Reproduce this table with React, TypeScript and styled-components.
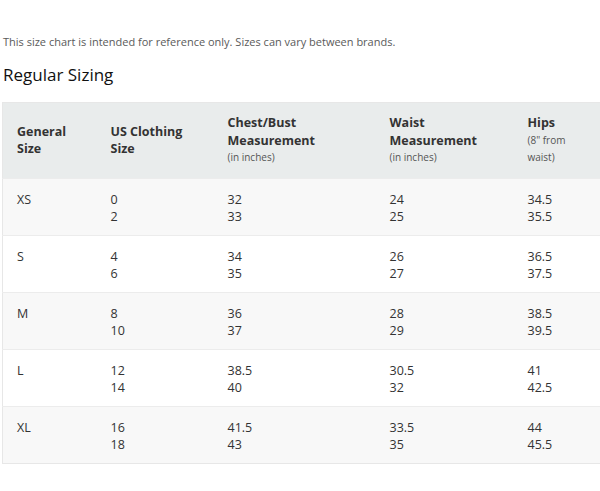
import React from "react";
import styled, { createGlobalStyle } from "styled-components";

const Global = createGlobalStyle`
  html, body { margin: 0; padding: 0; background: #fff; overflow: hidden; }
  body { font-family: "Open Sans", "Noto Sans", Arial, sans-serif; color: #333; }
`;

const Page = styled.div`
  width: 600px;
  height: 491px;
  padding: 34px 0 0 2px;
  box-sizing: border-box;
  overflow: hidden;
`;

const Note = styled.p`
  margin: 0 0 0 1px;
  font-size: 11px;
  line-height: 16px;
  color: #5a5a5a;
`;

const Title = styled.h2`
  margin: 13px 0 0 1px;
  font-size: 17px;
  font-weight: 400;
  line-height: 24px;
  color: #111;
`;

const Table = styled.table`
  margin-top: 15px;
  width: 640px;
  border-collapse: collapse;
  table-layout: fixed;
  border: 1px solid #e7e7e7;
`;

const HeadCell = styled.th`
  background: #e9ecec;
  text-align: left;
  vertical-align: middle;
  padding: 11px 14px;
  height: 52px;
  font-size: 12.5px;
  line-height: 17.5px;
  font-weight: 700;
  color: #333;
`;

const Sub = styled.span`
  display: block;
  font-size: 10px;
  line-height: 17.5px;
  font-weight: 400;
  color: #555;
`;

const Row = styled.tr<{ $alt: boolean }>`
  background: ${(p) => (p.$alt ? "#f8f8f8" : "#ffffff")};
  border-top: 1px solid #ececec;
`;

const Cell = styled.td`
  vertical-align: top;
  padding: 12px 14px 0;
  height: 44px;
  font-size: 12.5px;
  line-height: 17.5px;
  color: #333;
`;

const Line = styled.div``;

const rows = [
  ["XS", ["0", "2"], ["32", "33"], ["24", "25"], ["34.5", "35.5"]],
  ["S", ["4", "6"], ["34", "35"], ["26", "27"], ["36.5", "37.5"]],
  ["M", ["8", "10"], ["36", "37"], ["28", "29"], ["38.5", "39.5"]],
  ["L", ["12", "14"], ["38.5", "40"], ["30.5", "32"], ["41", "42.5"]],
  ["XL", ["16", "18"], ["41.5", "43"], ["33.5", "35"], ["44", "45.5"]],
] as const;

export default function App() {
  return (
    <Page>
      <Global />
      <Note>This size chart is intended for reference only. Sizes can vary between brands.</Note>
      <Title>Regular Sizing</Title>
      <Table>
        <colgroup>
          <col style={{ width: 94 }} />
          <col style={{ width: 117 }} />
          <col style={{ width: 162 }} />
          <col style={{ width: 138 }} />
          <col />
        </colgroup>
        <thead>
          <tr>
            <HeadCell>General<br />Size</HeadCell>
            <HeadCell>US Clothing<br />Size</HeadCell>
            <HeadCell>Chest/Bust<br />Measurement<Sub>(in inches)</Sub></HeadCell>
            <HeadCell>Waist<br />Measurement<Sub>(in inches)</Sub></HeadCell>
            <HeadCell>Hips<Sub>(8" from<br />waist)</Sub></HeadCell>
          </tr>
        </thead>
        <tbody>
          {rows.map((r, i) => (
            <Row key={r[0]} $alt={i % 2 === 0}>
              <Cell>{r[0]}</Cell>
              {[r[1], r[2], r[3], r[4]].map((vals, j) => (
                <Cell key={j}>
                  {vals.map((v) => (
                    <Line key={v}>{v}</Line>
                  ))}
                </Cell>
              ))}
            </Row>
          ))}
        </tbody>
      </Table>
    </Page>
  );
}
